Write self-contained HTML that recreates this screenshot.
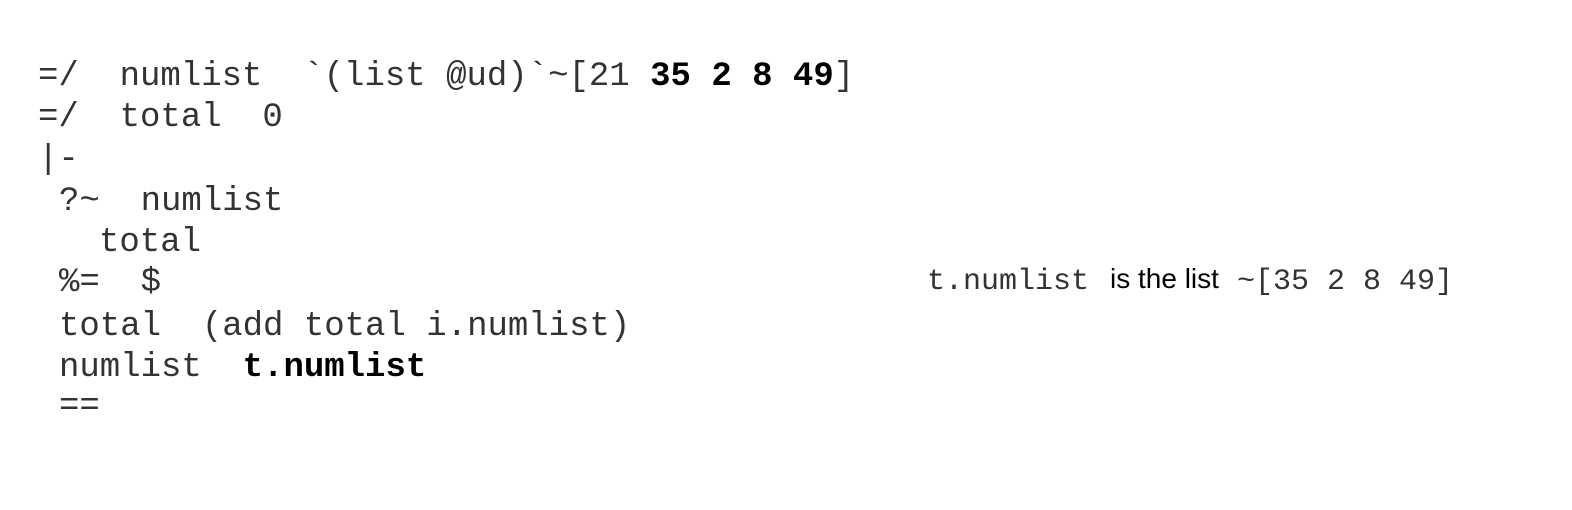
<!DOCTYPE html>
<html><head><meta charset="utf-8"><style>
body{margin:0;width:1572px;height:510px;background:#fff;position:relative;overflow:hidden;color:#333}
.l{position:absolute;font-family:"Liberation Mono",monospace;font-size:34px;line-height:34px;white-space:pre;font-weight:normal}
b{font-weight:bold;color:#000}
.s{font-family:"Liberation Sans",sans-serif;font-size:28px;color:#000}
.r{font-size:30px;line-height:30px}
</style></head><body>
<div class="l" style="left:38px;top:60px">=/  numlist  `(list @ud)`~[21 <b>35 2 8 49</b>]</div>
<div class="l" style="left:38px;top:101px">=/  total  0</div>
<div class="l" style="left:38px;top:143px">|-</div>
<div class="l" style="left:59px;top:185px">?~  numlist</div>
<div class="l" style="left:99px;top:226px">total</div>
<div class="l" style="left:59px;top:266px">%=  $</div>
<div class="l" style="left:59px;top:310px">total  (add total i.numlist)</div>
<div class="l" style="left:59px;top:351px">numlist  <b>t.numlist</b></div>
<div class="l" style="left:59px;top:390px">==</div>
<div class="l r" style="left:927px;top:267px">t.numlist</div>
<div class="l s" style="left:1110px;top:262px">is the list</div>
<div class="l r" style="left:1237px;top:267px">~[35 2 8 49]</div>
</body></html>
